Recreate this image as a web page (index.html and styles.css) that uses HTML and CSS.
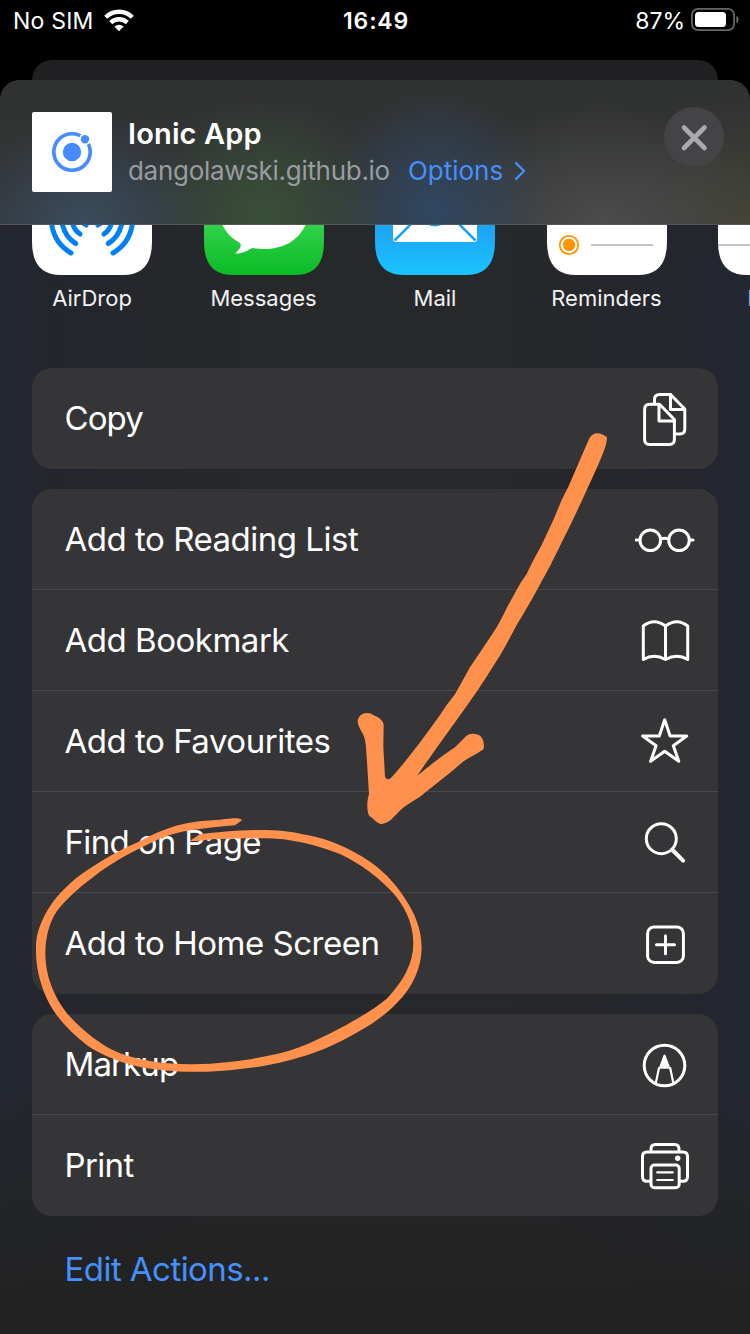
FILE: index.html
```html
<!DOCTYPE html>
<html lang="en">
<head>
<meta charset="utf-8">
<title>Share</title>
<link rel="stylesheet" href="styles.css">
</head>
<body>
<div class="phone">
  <div class="status">
    <div class="carrier"><span class="sim">No SIM</span>
      <svg class="wifi" width="30" height="23" viewBox="0 0 30 23"><g fill="none" stroke="#fff" stroke-width="4.300"><path d="M1.700 8.200a19 19 0 0 1 26.600 0"/><path d="M6.700 13.600a12 12 0 0 1 16.600 0"/></g><path fill="#fff" d="M15 22.200l-4.700-4.600q4.700-3.600 9.400 0z"/></svg>
    </div>
    <div class="time">16:49</div>
    <div class="power"><span>87%</span>
      <svg class="battery" width="48" height="23" viewBox="0 0 48 23"><rect x=".9" y=".9" width="42.200" height="21.200" rx="6" fill="none" stroke="#666" stroke-width="1.800"/><rect x="4" y="4" width="31" height="15" rx="3.500" fill="#fff"/><path d="M45.500 7.500q4 4 0 8z" fill="#777"/></svg>
    </div>
  </div>
  <div class="behind"></div>
  <div class="sheet">
    <header class="head">
      <svg class="app" width="80" height="80" viewBox="0 0 80 80"><rect width="80" height="80" rx="2" fill="#fff"/><circle cx="40" cy="40" r="18.200" fill="none" stroke="#488aff" stroke-width="3.600"/><circle cx="53" cy="27.300" r="6" fill="#fff"/><circle cx="53" cy="27.300" r="4.200" fill="#488aff"/><circle cx="40" cy="40" r="9.200" fill="#488aff"/></svg>
      <div class="meta">
        <div class="title">Ionic App</div>
        <div class="sub"><span class="host">dangolawski.github.io</span><span class="options">Options</span><svg class="chev" width="12" height="20" viewBox="0 0 12 20"><path d="M2 2l8 8-8 8" fill="none" stroke="#4590fb" stroke-width="2.400" stroke-linecap="round" stroke-linejoin="round"/></svg></div>
      </div>
      <svg class="close" width="60" height="60" viewBox="0 0 60 60"><circle cx="30" cy="30" r="30" fill="#444446"/><path d="M20 20.500l20.500 20.500M40.500 20.500L20 41" stroke="#a9a9b0" stroke-width="4.600" stroke-linecap="round"/></svg>
    </header>
    <div class="apps">
      <div class="tile">
        <svg width="120" height="50" viewBox="0 70 120 50"><path d="M0 0h120v87Q120 120 91 120H29Q0 120 0 87z" fill="#fff"/><g fill="none" stroke="#007ff9" stroke-width="5" stroke-linecap="round"><path d="M19.500 68Q22 88 39 98"/><path d="M30 68Q33 82 43.700 88.500"/><path d="M40.500 68Q42 75 48 79"/><path d="M51 68l3 2"/><path d="M100.500 68Q98 88 81 98"/><path d="M90 68Q87 82 76.300 88.500"/><path d="M79.500 68Q78 75 72 79"/><path d="M69 68l-3 2"/></g></svg>
        <span>AirDrop</span>
      </div>
      <div class="tile">
        <svg width="120" height="50" viewBox="0 70 120 50"><defs><linearGradient id="mg" x1="0" y1="0" x2="0" y2="1"><stop offset="0" stop-color="#5ff777"/><stop offset=".58" stop-color="#30d24a"/><stop offset="1" stop-color="#0bbb24"/></linearGradient></defs><path d="M0 0h120v87Q120 120 91 120H29Q0 120 0 87z" fill="url(#mg)"/><path d="M17 66C21 78 29 84 36 88Q39 92 31 98.500C38 99 43 96 48 93C73 97 95 89 103 66z" fill="#fff"/></svg>
        <span>Messages</span>
      </div>
      <div class="tile">
        <svg width="120" height="50" viewBox="0 70 120 50"><defs><linearGradient id="bg" x1="0" y1="0" x2="0" y2="1"><stop offset="0" stop-color="#1d70f2"/><stop offset=".58" stop-color="#1da2f6"/><stop offset="1" stop-color="#1ac4fd"/></linearGradient></defs><path d="M0 0h120v87Q120 120 91 120H29Q0 120 0 87z" fill="url(#bg)"/><path d="M18 60h84v24q0 3-3 3H21q-3 0-3-3z" fill="#fff"/><path d="M19.500 85.500L39 66M100.500 85.500L81 66" stroke="#1da4f6" stroke-width="2.600"/><ellipse cx="60" cy="66.500" rx="9" ry="5" fill="#1da2f6"/></svg>
        <span>Mail</span>
      </div>
      <div class="tile">
        <svg width="120" height="50" viewBox="0 70 120 50"><path d="M0 0h120v87Q120 120 91 120H29Q0 120 0 87z" fill="#fff"/><circle cx="22" cy="90" r="9.200" fill="none" stroke="#ff9500" stroke-width="1.800"/><circle cx="22" cy="90" r="6.200" fill="#ff9500"/><path d="M44 90h62" stroke="#c4c4c8" stroke-width="2"/></svg>
        <span>Reminders</span>
      </div>
      <div class="tile">
        <svg width="120" height="50" viewBox="0 70 120 50"><path d="M0 0h120v87Q120 120 91 120H29Q0 120 0 87z" fill="#fff"/><path d="M0 90h120" stroke="#c4c4c8" stroke-width="2"/></svg>
        <span>Notes</span>
      </div>
    </div>
    <div class="cards">
      <div class="card">
        <div class="row"><span class="tight">Copy</span><svg class="ico" viewBox="0 0 60 60"><path d="M19.500 16v-4.500q0-5 5-5H35.500L49.800 21v20q0 5-5 5H41"/><path d="M35.500 6.500V21.500H49.800"/><path d="M9.600 21.300q0-5 5-5H24.500L39.400 31.500V51.500q0 5-5 5H14.600q-5 0-5-5z"/><path d="M24 16.500V33H39.400"/></svg></div>
      </div>
      <div class="card">
        <div class="row"><span>Add to Reading List</span><svg class="ico" viewBox="0 0 60 60"><circle cx="15.300" cy="31.300" r="10.300"/><circle cx="44" cy="31.300" r="10.300"/><path d="M25.500 30q4-1.500 8.300 0M1.300 31h3.500M54.500 31h3.500"/></svg></div>
        <div class="row"><span>Add Bookmark</span><svg class="ico" viewBox="0 0 60 60"><path d="M8.300 49.500V16Q19 7.500 30.500 16Q42 7.500 52.700 16V49.500Q42 43 30.500 49.500Q19 43 8.300 49.500zM30.500 16V49.500"/></svg></div>
        <div class="row"><span>Add to Favourites</span><svg class="ico" viewBox="0 0 60 60"><path d="M29.700 8.800L35.100 25H51.800L38.300 34.700L43.800 50.300L29.700 40.300L15.600 50.300L21.100 34.700L7.600 25H24.300z"/></svg></div>
        <div class="row"><span class="snug">Find on Page</span><svg class="ico" viewBox="0 0 60 60"><circle cx="26.300" cy="26.700" r="15"/><path d="M37.500 38l10.600 10.600" stroke-width="4"/></svg></div>
        <div class="row"><span>Add to Home Screen</span><svg class="ico" viewBox="0 0 60 60"><rect x="12.600" y="14" width="35.800" height="35.400" rx="6.500"/><path d="M30.500 22.700v18M21.500 31.700h18"/></svg></div>
      </div>
      <div class="card">
        <div class="row"><span class="tight">Markup</span><svg class="ico" viewBox="0 0 60 60"><circle cx="29.500" cy="31.500" r="20.300"/><path d="M24 34L20.800 49M35.200 34L38.300 49" stroke-width="2.200"/><path d="M29.500 20.500q1 0 1.500 2l4.600 12.300h-12L28 22.500q.5-2 1.500-2z" fill="#fff" stroke="none"/></svg></div>
        <div class="row"><span class="snug">Print</span><svg class="ico" viewBox="0 0 60 60"><path d="M16 16.500v-2.500q0-4.500 4.500-4.500H39.500q4.500 0 4.500 4.500v2.500"/><path d="M15.500 46.200H12q-4.500 0-4.500-4.500V21.500q0-4.500 4.500-4.500H48q4.500 0 4.500 4.500V41.700q0 4.500-4.500 4.500H44.500"/><rect x="16" y="30" width="28.200" height="22.700" rx="3.500"/><path d="M22.200 37.400h15.600M22.200 45h15.600" stroke-width="2.200"/><circle cx="42.700" cy="23.300" r="2.700" fill="#fff" stroke="none"/></svg></div>
      </div>
    </div>
    <div class="edit"><span>Edit Actions...</span></div>
  </div>
  <svg class="scribble" width="750" height="1334" viewBox="0 0 750 1334" fill="#ff914d">
    <path transform="translate(340 420) scale(.33333)" d="M748 55C760 35 780 35 801 52C800 80 785 110 770 145C745 200 717 262 690 317C665 368 645 408 625 448L607 480C582 527 556 573 530 615C508 656 491 690 470 722C432 784 392 842 350 900C310 955 270 1010 232 1067C270 1035 310 1005 345 982L372 955C385 940 395 938 417 945C428 952 434 965 431 987C415 1000 390 1010 367 1027C330 1060 290 1090 240 1130C200 1155 190 1160 170 1182C155 1197 145 1210 125 1212C110 1212 102 1195 88 1188C80 1175 80 1145 87 1122L80 1010C78 980 78 955 65 935C50 910 50 900 60 887C75 875 90 878 100 885C115 892 130 900 131 915L130 980L135 1070Q143 1085 155 1072C205 1016 252 952 300 885L320 855L345 823C360 796 375 768 390 742C417 702 443 663 470 622C487 594 498 567 512 542L542 488L560 462C573 433 589 404 605 375L640 300L665 240L685 200z"/>
    <path transform="translate(20 800) scale(.33333)" d="M667 60C655 52 640 55 600 59C560 62 530 62 490 72C430 86 390 108 350 128C290 153 235 187 185 222C160 240 140 260 122 278C100 300 78 335 65 365C50 400 48 420 48 450C48 500 58 545 80 595C105 650 150 695 200 735C250 770 310 790 370 803C450 815 510 816 560 815C620 813 680 806 730 798C790 788 850 772 910 748C950 731 985 712 1020 692C1065 668 1105 636 1130 610C1180 560 1205 500 1205 440C1203 390 1190 355 1170 320C1140 265 1095 215 1050 185C990 145 930 118 860 105C810 93 770 90 720 90C650 91 590 97 540 103L510 122C530 126 560 117 600 117C650 115 750 112 800 119C860 128 910 142 960 162C1020 190 1080 235 1120 280C1150 315 1180 365 1180 430C1180 490 1150 545 1100 596C1050 638 960 687 900 715C860 735 820 750 780 760C700 778 620 790 520 793C440 794 360 782 300 760C240 735 190 692 150 650C105 600 76 530 76 460C76 400 95 350 120 322C150 285 190 253 240 215C290 180 340 153 400 125C440 107 470 97 500 93C550 84 600 80 645 76z"/>
  </svg>
</div>
</body>
</html>
```

FILE: styles.css
```css
* { box-sizing: border-box; }
body { margin: 0; background: #000; color: #fff; font-family: Inter, "Liberation Sans", sans-serif; }
svg { display: block; flex: none; }
span { white-space: nowrap; }
.phone { position: relative; width: 750px; height: 1334px; overflow: hidden; display: flex; flex-direction: column; background: #000; }
.status { height: 60px; padding: 0 11px 0 13px; display: grid; grid-template-columns: 1fr auto 1fr; align-items: start; line-height: 42px; font-size: 23px; }
.carrier, .power { display: flex; }
.power { justify-content: flex-end; }
.sim { letter-spacing: .2px; }
.wifi { margin: 9px 0 0 10px; }
.battery { margin: 8px 0 0 6px; }
.time { font-weight: 600; letter-spacing: .8px; }
.behind { height: 20px; margin: 0 32px; border-radius: 20px 20px 0 0; background: #202022; }
.sheet { flex: 1; border-radius: 20px 20px 0 0; overflow: hidden; background: linear-gradient(180deg, rgba(34,34,34,0) 80%, #222 98%), linear-gradient(90deg, #232730 0, #23262c 9%, #27282a 35%, #27282a 65%, #23262d 91%, #232731 100%); }
.head { height: 145px; border-bottom: 1px solid #55565a; padding: 27px 26px 0 32px; display: flex; align-items: flex-start;
  background:
    radial-gradient(ellipse 120px 110px at 85px 145px, rgba(58,78,98,.9), rgba(58,78,98,0)),
    radial-gradient(ellipse 125px 120px at 264px 135px, rgba(58,82,56,.9), rgba(58,82,56,0)),
    radial-gradient(ellipse 110px 120px at 435px 130px, rgba(48,72,100,.95), rgba(48,72,100,0)),
    radial-gradient(ellipse 170px 120px at 605px 145px, rgba(78,77,77,.95), rgba(78,77,77,0)),
    radial-gradient(ellipse 130px 130px at 750px 145px, rgba(68,67,52,.9), rgba(68,67,52,0)),
    linear-gradient(#303131, #343739); }
.app { margin-top: 5px; }
.meta { flex: 1; padding-left: 16px; }
.title { font-size: 29px; line-height: 36px; font-weight: 600; letter-spacing: .15px; margin-top: 9px; }
.sub { display: flex; align-items: center; font-size: 26px; line-height: 36px; margin-top: 1px; }
.host { color: #999ca0; letter-spacing: -.3px; }
.options { color: #4590fb; margin-left: 18px; }
.chev { margin-left: 11px; }
.apps { height: 143px; padding-left: 32px; display: flex; gap: 51.500px; }
.tile { flex: none; width: 120px; display: flex; flex-direction: column; align-items: center; font-size: 22px; line-height: 30px; color: #f2f2f3; }
.tile span { margin-top: 8px; }
.cards { padding: 0 32px; display: flex; flex-direction: column; gap: 20px; }
.card { background: #353537; border-radius: 20px; overflow: hidden; }
.row { height: 101px; display: flex; justify-content: space-between; align-items: flex-start; padding: 20px 23px 0 32.500px; font-size: 33px; line-height: 61px; letter-spacing: -.48px; border-bottom: 1px solid #49494b; }
.row:last-child { border-bottom: 0; }
.snug { letter-spacing: -.65px; }
.tight { letter-spacing: -.9px; }
.ico { width: 60px; height: 60px; fill: none; stroke: #fff; stroke-width: 3; stroke-linecap: round; stroke-linejoin: round; }
.edit { padding: 23px 64.500px 0; font-size: 33px; line-height: 61px; letter-spacing: -.55px; color: #4590fb; }
.scribble { position: absolute; left: 0; top: 0; }
```
